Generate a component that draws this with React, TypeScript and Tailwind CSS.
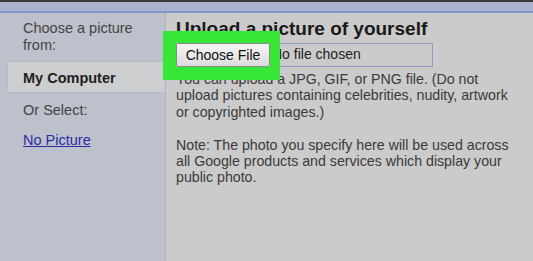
export default function App() {
  return (
    <div className="w-[533px] h-[261px] overflow-hidden flex flex-col font-['Liberation_Sans',Arial,sans-serif]">
      <div className="h-[2px] bg-[#3a3a3c]" />
      <div className="h-[11px] bg-[#a9b3cf] border-b-2 border-[#8494c4]" />
      <div className="flex flex-1">
        <aside className="w-[166px] bg-[#bcc1cb] border-r border-[#adb3bf] pt-[7px]">
          <p className="pl-[23px] text-[14.5px] leading-[17px] text-[#444]">
            Choose a picture
            <br />
            from:
          </p>
          <div className="mt-[7px] ml-[7px] h-[32px] pl-[15px] pt-[8px] bg-[#cdcecf] border border-r-0 border-[#b4b9c3] text-[14.5px] leading-[17px] font-bold text-[#1e1e1e]">
            My Computer
          </div>
          <p className="mt-[9px] pl-[23px] text-[14.5px] leading-[17px] text-[#444]">Or Select:</p>
          <a className="block mt-[13px] ml-[23px] w-fit text-[14.5px] leading-[17px] text-[#2c2ca4] underline">
            No Picture
          </a>
        </aside>
        <main className="relative flex-1 bg-[#cbcbcb] pl-[10px] pt-[5px] text-[#3a3a3a]">
          <h1 className="text-[19px] leading-[22px] font-bold text-[#1a1a1a]">Upload a picture of yourself</h1>
          <div className="mt-[3px] flex h-[24px]">
            <button className="w-[94px] h-[24px] border border-[#8a8a8a] rounded-[2px] bg-gradient-to-b from-[#f6f6f6] to-[#dcdcdc] text-[14px] text-[#111]">
              Choose File
            </button>
            <div className="w-[163px] h-[24px] border-[1.5px] border-l-0 border-[#8d9dc8] pl-[2px] text-[14px] leading-[21px] text-[#222]">
              No file chosen
            </div>
          </div>
          <p className="mt-[4px] w-[340px] text-[14.2px] leading-[16.4px]">
            You can upload a JPG, GIF, or PNG file. (Do not upload pictures containing celebrities, nudity, artwork or
            copyrighted images.)
            <br />
            <br />
            Note: The photo you specify here will be used across all Google products and services which display your
            public photo.
          </p>
          <div className="absolute left-[-3px] top-[18px] w-[117px] h-[49px] border-[#37e637] border-l-[13px] border-t-[12px] border-r-[10px] border-b-[13px]" />
        </main>
      </div>
    </div>
  );
}
